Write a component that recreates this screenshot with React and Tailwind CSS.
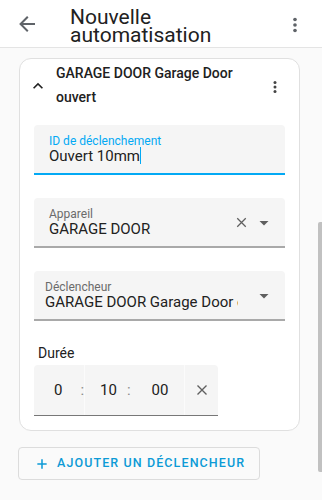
import { useState } from "react";

const Dots = ({ size = 24, color = "#5f6368" }) => (
    <svg width={size} height={size} viewBox="0 0 24 24" fill={color}>
        <circle cx="12" cy="6" r="2"></circle>
        <circle cx="12" cy="12" r="2"></circle>
        <circle cx="12" cy="18" r="2"></circle>
    </svg>
);

const MenuDown = () => (
    <svg width="24" height="24" viewBox="0 0 24 24" fill="#5f5f5f">
        <path d="M7.5 10l4.5 4.5 4.5-4.5z"></path>
    </svg>
);

const Close = ({ size = 18 }) => (
    <svg width={size} height={size} viewBox="0 0 24 24" fill="none" stroke="#5f5f5f" strokeWidth="1.8">
        <path d="M6 6l12 12M18 6L6 18"></path>
    </svg>
);

const Field = ({ label, value, focused, pl = "pl-[15px]", children }) => (
    <div
        className={`flex items-center bg-[#f5f5f5] rounded-t-[4px] h-[50px] ${
            focused ? "border-b-2 border-[#03a9f4]" : "border-b-2 border-[#a9a9a9]"
        }`}
    >
        <div className={`flex-1 min-w-0 ${pl} pt-[10px] pb-[8px] self-stretch`}>
            <div className={`text-[12px] leading-[12px] ${focused ? "text-[#03a9f4]" : "text-[#6b6b6b]"}`}>
                {label}
            </div>
            <div className="text-[15px] leading-[18px] text-[#212121] whitespace-nowrap overflow-hidden">
                {value}
                {focused && <span className="inline-block w-[1px] h-[17px] bg-[#03a9f4] align-[-3px]"></span>}
            </div>
        </div>
        {children}
    </div>
);

export default function App() {
    const [id] = useState("Ouvert 10mm");

    return (
        <div className="relative w-[322px] h-[500px] overflow-hidden bg-[#fafafa] font-['Roboto',sans-serif] text-[#212121]">
            {/* top bar */}
            <div className="flex items-start h-[48px] bg-white border-b border-[#e4e4e4]">
                <div className="w-[52px] h-[48px] flex items-center justify-center pl-[1px]">
                    <svg width="24" height="24" viewBox="0 0 24 24" fill="#5f6368">
                        <path d="M20 11v2H8l5.5 5.5-1.42 1.42L4.16 12l7.92-7.92L13.5 5.5 8 11h12z"></path>
                    </svg>
                </div>
                <div className="ml-[18px] pt-[8px] text-[21px] leading-[18px] text-[#212121] flex-1">
                    Nouvelle
                    <br />
                    automatisation
                </div>
                <div className="w-[40px] h-[48px] flex items-center justify-center mr-[7px] pt-[2px]">
                    <Dots size={22} />
                </div>
            </div>

            {/* card */}
            <div className="ml-[19px] mt-[10px] w-[281px] bg-white border border-[#e0e0e0] rounded-[12px]">
                <div className="flex items-center">
                    <div className="w-[28px] flex justify-end">
                        <svg width="20" height="20" viewBox="0 0 24 24" fill="#212121">
                            <path d="M7.41 15.41L12 10.83l4.59 4.58L18 14l-6-6-6 6z"></path>
                        </svg>
                    </div>
                    <div className="ml-[8px] pt-[2px] pb-[4px] flex-1 text-[14px] leading-[24px] font-medium text-[#212121]">
                        GARAGE DOOR Garage Door
                        <br />
                        ouvert
                    </div>
                    <div className="w-[30px] mr-[9px] flex justify-center pt-[1px]">
                        <Dots size={18} color="#444" />
                    </div>
                </div>

                <div className="px-[14px] pt-[12px] pb-[14px]">
                    <Field label="ID de déclenchement" value={id} focused />

                    <div className="mt-[23px]">
                        <Field label="Appareil" value="GARAGE DOOR">
                            <div className="flex items-center pr-[9px] gap-[2px] pt-[1px]">
                                <Close size={17} />
                                <MenuDown />
                            </div>
                        </Field>
                    </div>

                    <div className="mt-[23px]">
                        <Field label="Déclencheur" value="GARAGE DOOR Garage Door ouvert" pl="pl-[11px]">
                            <div className="flex items-center pl-[14px] pr-[9px] pt-[1px]">
                                <MenuDown />
                            </div>
                        </Field>
                    </div>

                    <div className="mt-[22px] pl-[4px] text-[14px] leading-[20px] text-[#212121]">Durée</div>

                    <div className="mt-[2px] flex w-[184px] h-[51px] bg-[#f5f5f5] rounded-t-[4px] border-b border-[#777] text-[15px] text-[#212121]">
                        <div className="w-[50px] flex items-center">
                            <span className="ml-[20px]">0</span>
                            <span className="ml-[18px] text-[#8a8a8a]">:</span>
                        </div>
                        <div className="w-[1px] bg-[#fbfbfb]"></div>
                        <div className="w-[99px] flex items-center">
                            <span className="ml-[15px]">10</span>
                            <span className="ml-[10px] text-[#8a8a8a]">:</span>
                            <span className="ml-[21px]">00</span>
                        </div>
                        <div className="w-[1px] bg-[#fbfbfb]"></div>
                        <div className="flex-1 flex items-center justify-center">
                            <Close size={18} />
                        </div>
                    </div>
                </div>
            </div>

            {/* add trigger */}
            <div className="ml-[18px] mt-[16px] w-[242px] h-[33px] flex items-center border border-[#dcdcdc] rounded-[4px] text-[#0d9ad6]">
                <svg className="ml-[16px]" width="14" height="14" viewBox="0 0 24 24" fill="none" stroke="#0d9ad6" strokeWidth="2.6">
                    <path d="M12 4v16M4 12h16"></path>
                </svg>
                <span className="ml-[8px] text-[12.5px] font-medium tracking-[1.1px] uppercase">
                    Ajouter un déclencheur
                </span>
            </div>

            {/* scrollbar */}
            <div className="absolute right-0 top-[222px] w-[4px] h-[250px] rounded-l-[2px] bg-[#c1c1c1]"></div>
        </div>
    );
}
